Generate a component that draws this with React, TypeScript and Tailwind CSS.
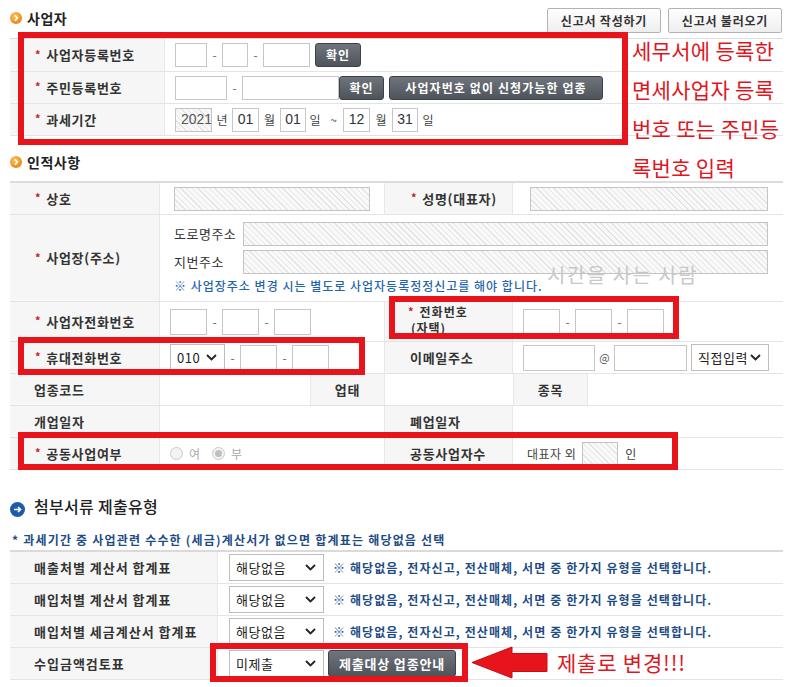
import React from "react";

function Star() {
  return <span className="text-[#c8202a] text-[11px] mr-[5px] font-bold relative top-[-1px]">*</span>;
}

function Field({ className = "", children }: { className?: string; children?: React.ReactNode }) {
  return (
    <div className={"h-[24px] border border-[#c6c6c6] bg-white flex items-center justify-center text-[14px] text-[#333] font-['Liberation_Sans',sans-serif] " + className}>
      {children}
    </div>
  );
}

function Hatch({ className = "", children }: { className?: string; children?: React.ReactNode }) {
  return (
    <div className={"h-[24px] border border-[#c4c4c4] bg-[repeating-linear-gradient(45deg,#f9f9f9_0px,#f9f9f9_3px,#e4e4e4_3px,#e4e4e4_4px)] flex items-center overflow-hidden whitespace-nowrap text-[14px] text-[#555] font-['Liberation_Sans',sans-serif] " + className}>
      {children}
    </div>
  );
}

function Dash({ className = "w-[15px]" }: { className?: string }) {
  return <span className={"text-center text-[#666] text-[12px] " + className}>-</span>;
}

function Unit({ className = "", children }: { className?: string; children?: React.ReactNode }) {
  return <span className={"text-center text-[12px] text-[#444] " + className}>{children}</span>;
}

function Chevron() {
  return (
    <svg width="11" height="7" viewBox="0 0 11 7">
      <polyline points="1,1 5.5,5.5 10,1" fill="none" stroke="#222" strokeWidth="1.8" />
    </svg>
  );
}

function Select({ className = "", value }: { className?: string; value: string }) {
  return (
    <div className={"h-[27px] border border-[#bdbdbd] bg-white flex items-center justify-between pl-[6px] pr-[7px] text-[13px] text-[#222] tracking-[0.5px] " + className}>
      <span>{value}</span>
      <Chevron />
    </div>
  );
}

function DarkBtn({ className = "", children }: { className?: string; children?: React.ReactNode }) {
  return (
    <div className={"rounded-[3px] border border-[#3e4148] bg-[linear-gradient(#70757d,#4f535a)] text-white font-bold flex items-center justify-center whitespace-nowrap " + className}>
      {children}
    </div>
  );
}

function Lbl({ className = "", star, children }: { className?: string; star?: boolean; children?: React.ReactNode }) {
  return (
    <div className={"bg-[#f6f6f6] flex items-center text-[13px] font-bold text-[#333] tracking-[0.7px] whitespace-nowrap " + className}>
      {star && <Star />}
      {children}
    </div>
  );
}

function Radio({ checked, className = "" }: { checked?: boolean; className?: string }) {
  return (
    <span className={"w-[13px] h-[13px] rounded-full border border-[#cacaca] bg-[#f3f3f3] flex items-center justify-center " + className}>
      {checked && <span className="w-[7px] h-[7px] rounded-full bg-[#c0c0c0]" />}
    </span>
  );
}

function OrangeIcon() {
  return (
    <svg width="12" height="12" viewBox="0 0 12 12">
      <defs>
        <radialGradient id="og" cx="40%" cy="35%" r="70%">
          <stop offset="0%" stopColor="#ffc25a" />
          <stop offset="100%" stopColor="#e9830f" />
        </radialGradient>
      </defs>
      <circle cx="6" cy="6" r="6" fill="url(#og)" />
      <path d="M4.9 3.4 L7.4 6 L4.9 8.6" stroke="#fff" strokeWidth="1.6" fill="none" />
    </svg>
  );
}

function BlueIcon() {
  return (
    <svg width="15" height="15" viewBox="0 0 15 15">
      <circle cx="7.5" cy="7.5" r="7.5" fill="#1d5ca8" />
      <path d="M4 7.5 H10.5 M8 5 L10.5 7.5 L8 10" stroke="#fff" strokeWidth="1.7" fill="none" />
    </svg>
  );
}

function TopBtn({ children }: { children?: React.ReactNode }) {
  return (
    <div className="w-[114px] h-[25px] border border-[#b3b3b3] rounded-[2px] bg-[linear-gradient(#ffffff,#eeeeee)] flex items-center justify-center text-[12px] font-bold text-[#333] tracking-[0.8px]">
      {children}
    </div>
  );
}

const row = "flex border-b border-[#e4e4e4]";
const noteCls = "ml-[9px] text-[12px] font-semibold text-[#1d4c85] tracking-[1.1px] whitespace-nowrap";
const lbl3 = "w-[208px] bg-[#f6f6f6] border-r border-[#e8e8e8] flex items-center pl-[24px] text-[13px] font-semibold text-[#333] tracking-[1px] whitespace-nowrap";

export default function App() {
  return (
    <div className="relative w-[800px] h-[687px] overflow-hidden bg-white font-['Noto_Sans_CJK_KR',sans-serif] text-[#333]">
      <div className="pl-[10px] w-[783px]">
        {/* header 1 */}
        <div className="h-[38px] flex justify-between items-start">
          <div className="flex items-center gap-[5px] h-[36px]">
            <OrangeIcon />
            <span className="text-[14px] font-bold text-[#222] tracking-[0.5px]">사업자</span>
          </div>
          <div className="flex gap-[7px] pt-[8px] pr-[1px]">
            <TopBtn>신고서 작성하기</TopBtn>
            <TopBtn>신고서 불러오기</TopBtn>
          </div>
        </div>

        {/* table 1 */}
        <div className="border-t border-[#dcdcdc]">
          <div className={row + " h-[33px]"}>
            <Lbl className="w-[155px] pl-[25px] border-r border-[#e8e8e8]" star>사업자등록번호</Lbl>
            <div className="flex-1 flex items-center pl-[10px]">
              <Field className="w-[32px]" />
              <Dash />
              <Field className="w-[26px]" />
              <Dash />
              <Field className="w-[47px]" />
              <DarkBtn className="ml-[5px] w-[46px] h-[24px] text-[12px] tracking-[1px]">확인</DarkBtn>
            </div>
          </div>
          <div className={row + " h-[32px]"}>
            <Lbl className="w-[155px] pl-[25px] border-r border-[#e8e8e8]" star>주민등록번호</Lbl>
            <div className="flex-1 flex items-center pl-[10px]">
              <Field className="w-[52px]" />
              <Dash />
              <Field className="w-[97px]" />
              <DarkBtn className="w-[45px] h-[24px] text-[12px] tracking-[1px]">확인</DarkBtn>
              <DarkBtn className="ml-[5px] w-[214px] h-[24px] text-[12px] tracking-[1.1px]">사업자번호 없이 신청가능한 업종</DarkBtn>
            </div>
          </div>
          <div className={row + " h-[32px]"}>
            <Lbl className="w-[155px] pl-[25px] border-r border-[#e8e8e8]" star>과세기간</Lbl>
            <div className="flex-1 flex items-center pl-[10px]">
              <Hatch className="w-[37px] pl-[5px]">2021</Hatch>
              <Unit className="w-[20px]">년</Unit>
              <Field className="w-[27px]">01</Field>
              <Unit className="w-[21px]">월</Unit>
              <Field className="w-[26px]">01</Field>
              <Unit className="w-[18px]">일</Unit>
              <Unit className="w-[19px]">~</Unit>
              <Field className="w-[27px]">12</Field>
              <Unit className="w-[22px]">월</Unit>
              <Field className="w-[26px]">31</Field>
              <Unit className="w-[20px]">일</Unit>
            </div>
          </div>
        </div>

        {/* header 2 */}
        <div className="h-[45px] flex items-center gap-[5px] pt-[7px]">
          <OrangeIcon />
          <span className="text-[14px] font-bold text-[#222] tracking-[0.5px]">인적사항</span>
        </div>

        {/* table 2 */}
        <div className="border-t-2 border-[#dcdcdc]">
          <div className={row + " h-[32px]"}>
            <Lbl className="w-[150px] pl-[25px] border-r border-[#e8e8e8]" star>상호</Lbl>
            <div className="w-[225px] flex items-center pl-[14px] border-r border-[#e8e8e8]">
              <Hatch className="w-[196px]" />
            </div>
            <Lbl className="w-[128px] pl-[26px] border-r border-[#e8e8e8]" star>성명(대표자)</Lbl>
            <div className="flex-1 flex items-center pl-[17px]">
              <Hatch className="w-[238px]" />
            </div>
          </div>
          <div className={row + " h-[87px]"}>
            <Lbl className="w-[150px] pl-[25px] border-r border-[#e8e8e8]" star>사업장(주소)</Lbl>
            <div className="flex-1 flex flex-col pl-[14px] pt-[7px]">
              <div className="flex items-center h-[24px]">
                <span className="w-[69px] text-[13px] text-[#333] tracking-[0.5px]">도로명주소</span>
                <Hatch className="w-[525px]" />
              </div>
              <div className="flex items-center h-[24px] mt-[4px]">
                <span className="w-[69px] text-[13px] text-[#333] tracking-[0.5px]">지번주소</span>
                <Hatch className="w-[525px]" />
              </div>
              <div className="h-[24px] flex items-center text-[12px] font-medium text-[#2465ad] tracking-[1px] whitespace-nowrap">
                ※ 사업장주소 변경 시는 별도로 사업자등록정정신고를 해야 합니다.
              </div>
            </div>
          </div>
          <div className={row + " h-[40px]"}>
            <Lbl className="w-[150px] pl-[25px] border-r border-[#e8e8e8]" star>사업자전화번호</Lbl>
            <div className="w-[225px] flex items-center pl-[10px] border-r border-[#e8e8e8]">
              <Field className="w-[37px] h-[26px]" />
              <Dash />
              <Field className="w-[37px] h-[26px]" />
              <Dash />
              <Field className="w-[37px] h-[26px]" />
            </div>
            <div className="w-[128px] bg-[#f6f6f6] border-r border-[#e8e8e8] flex flex-col justify-center pl-[23px] pb-[4px] text-[12px] font-bold text-[#333] leading-[16px] tracking-[1px]">
              <div><Star />전화번호</div>
              <div className="pl-[3px]">(자택)</div>
            </div>
            <div className="flex-1 flex items-center pl-[10px]">
              <Field className="w-[37px] h-[26px]" />
              <Dash />
              <Field className="w-[37px] h-[26px]" />
              <Dash />
              <Field className="w-[37px] h-[26px]" />
            </div>
          </div>
          <div className={row + " h-[32px]"}>
            <Lbl className="w-[150px] pl-[25px] border-r border-[#e8e8e8]" star>휴대전화번호</Lbl>
            <div className="w-[225px] flex items-center pl-[10px] border-r border-[#e8e8e8]">
              <Select className="w-[55px] h-[26px]" value="010" />
              <Dash />
              <Field className="w-[37px] h-[26px]" />
              <Dash />
              <Field className="w-[37px] h-[26px]" />
            </div>
            <Lbl className="w-[128px] pl-[25px] border-r border-[#e8e8e8]">이메일주소</Lbl>
            <div className="flex-1 flex items-center pl-[10px]">
              <Field className="w-[72px] h-[26px]" />
              <span className="w-[19px] text-center text-[11px] text-[#555]">@</span>
              <Field className="w-[73px] h-[26px]" />
              <Select className="ml-[4px] w-[78px] h-[26px]" value="직접입력" />
            </div>
          </div>
          <div className={row + " h-[32px]"}>
            <Lbl className="w-[150px] pl-[24px] border-r border-[#e8e8e8]">업종코드</Lbl>
            <div className="w-[150px]" />
            <Lbl className="w-[75px] justify-center border-x border-[#e8e8e8]">업태</Lbl>
            <div className="w-[128px]" />
            <Lbl className="w-[75px] justify-center border-x border-[#e8e8e8]">종목</Lbl>
            <div className="flex-1" />
          </div>
          <div className={row + " h-[32px]"}>
            <Lbl className="w-[150px] pl-[24px] border-r border-[#e8e8e8]">개업일자</Lbl>
            <div className="w-[225px] border-r border-[#e8e8e8]" />
            <Lbl className="w-[128px] pl-[25px] border-r border-[#e8e8e8]">폐업일자</Lbl>
            <div className="flex-1" />
          </div>
          <div className={row + " h-[32px]"}>
            <Lbl className="w-[150px] pl-[25px] border-r border-[#e8e8e8]" star>공동사업여부</Lbl>
            <div className="w-[225px] flex items-center pl-[10px] border-r border-[#e8e8e8] text-[12px] text-[#aaa]">
              <Radio />
              <span className="ml-[6px]">여</span>
              <Radio checked className="ml-[12px]" />
              <span className="ml-[6px]">부</span>
            </div>
            <Lbl className="w-[128px] pl-[25px] border-r border-[#e8e8e8]">공동사업자수</Lbl>
            <div className="flex-1 flex items-center pl-[14px] text-[12px] text-[#444] tracking-[0.5px]">
              <span>대표자 외</span>
              <Hatch className="ml-[6px] w-[36px]" />
              <span className="ml-[7px]">인</span>
            </div>
          </div>
        </div>

        {/* section 3 */}
        <div className="h-[59px] flex items-end pb-[12px] gap-[9px]">
          <BlueIcon />
          <span className="text-[16px] font-medium text-[#222] leading-[22px] tracking-[0.3px]">첨부서류 제출유형</span>
        </div>
        <div className="h-[21px] leading-[21px] pl-[2px] text-[12px] font-semibold text-[#1d4c85] tracking-[1.2px] whitespace-nowrap">
          * 과세기간 중 사업관련 수수한 (세금)계산서가 없으면 합계표는 해당없음 선택
        </div>
        <div className="border-t-2 border-[#dadada]">
          {["매출처별 계산서 합계표", "매입처별 계산서 합계표", "매입처별 세금계산서 합계표"].map((t) => (
            <div key={t} className={row + " h-[32px]"}>
              <div className={lbl3}>{t}</div>
              <div className="flex-1 flex items-center pl-[11px]">
                <Select className="w-[95px]" value="해당없음" />
                <span className={noteCls}>※ 해당없음, 전자신고, 전산매체, 서면 중 한가지 유형을 선택합니다.</span>
              </div>
            </div>
          ))}
          <div className={row + " h-[32px] border-[#d6d6d6]"}>
            <div className={lbl3}>수입금액검토표</div>
            <div className="flex-1 flex items-center pl-[11px]">
              <Select className="w-[95px]" value="미제출" />
              <DarkBtn className="ml-[4px] w-[128px] h-[27px] text-[13px] tracking-[0.8px]">제출대상 업종안내</DarkBtn>
            </div>
          </div>
        </div>
      </div>

      {/* annotations */}
      <div className="absolute left-[18px] top-[32px] w-[610px] h-[113px] border-[6px] border-[#e8141c]" />
      <div className="absolute left-[389px] top-[296px] w-[290px] h-[43px] border-[6px] border-[#e8141c]" />
      <div className="absolute left-[18px] top-[337px] w-[347px] h-[38px] border-[6px] border-[#e8141c]" />
      <div className="absolute left-[18px] top-[432px] w-[660px] h-[38px] border-[6px] border-[#e8141c]" />
      <div className="absolute left-[210px] top-[643px] w-[258px] h-[39px] border-[6px] border-[#e8141c]" />

      <div className="absolute left-[632px] top-[31px] flex flex-col text-[21px] leading-[39px] text-[#e0161e] whitespace-nowrap tracking-[0.3px]">
        <span>세무서에 등록한</span>
        <span>면세사업자 등록</span>
        <span>번호 또는 주민등</span>
        <span>록번호 입력</span>
      </div>

      <div className="absolute left-[547px] top-[262px] text-[20px] leading-[26px] text-[#c8c8c8] whitespace-nowrap tracking-[1.5px]">시간을 사는 사람</div>

      <svg className="absolute left-[472px] top-[646px]" width="76" height="33" viewBox="0 0 76 33">
        <polygon points="0,16.5 40,1 40,7.5 75,7.5 75,25.5 40,25.5 40,32" fill="#e8141c" stroke="#c40f16" strokeWidth="1" />
      </svg>
      <div className="absolute left-[557px] top-[649px] text-[21px] leading-[26px] text-[#e0161e] whitespace-nowrap tracking-[0.8px]">제출로 변경!!!</div>
    </div>
  );
}
